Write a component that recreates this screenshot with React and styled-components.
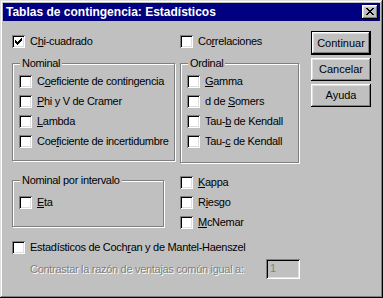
import React from 'react';
import styled, { createGlobalStyle } from 'styled-components';

const GlobalStyle = createGlobalStyle`
  html, body {
    margin: 0;
    padding: 0;
    background: #c0c0c0;
  }
  body {
    font-family: "Liberation Sans", Arial, sans-serif;
    font-size: 11px;
    letter-spacing: -0.3px;
    color: #000;
  }
`;

const Window = styled.div`
  width: 383px;
  height: 298px;
  box-sizing: border-box;
  padding: 3px;
  background: #c0c0c0;
  box-shadow: inset -1px -1px 0 #000, inset 1px 1px 0 #dfdfdf,
    inset -2px -2px 0 #808080, inset 2px 2px 0 #fff;
  display: flex;
  flex-direction: column;
`;

const TitleBar = styled.div`
  height: 18px;
  background: #000080;
  color: #fff;
  display: flex;
  align-items: center;
  padding: 0 2px 0 3px;
  font-size: 12px;
  font-weight: bold;
  letter-spacing: 0;
  white-space: nowrap;
`;

const TitleText = styled.span`
  flex: 1;
`;

const CloseButton = styled.span`
  width: 16px;
  height: 14px;
  box-sizing: border-box;
  background: #c0c0c0;
  box-shadow: inset -1px -1px 0 #000, inset 1px 1px 0 #fff,
    inset -2px -2px 0 #808080, inset 2px 2px 0 #dfdfdf;
  display: flex;
  align-items: center;
  justify-content: center;
  padding: 0 1px 1px 0;
`;

const Body = styled.div`
  display: flex;
  padding: 10px 0 0 9px;
`;

const Left = styled.div`
  width: 288px;
  margin-top: 4px;
  display: grid;
  grid-template-columns: 168px 120px;
  align-items: start;
`;

const Buttons = styled.div`
  margin-left: 11px;
  display: flex;
  flex-direction: column;
  gap: 3px;
`;

const Button = styled.div`
  width: 60px;
  height: ${p => (p.$default ? 24 : 23)}px;
  box-sizing: border-box;
  display: flex;
  align-items: center;
  justify-content: center;
  background: #c0c0c0;
  letter-spacing: 0;
  box-shadow: ${p =>
    p.$default
      ? 'inset 0 0 0 1px #000, inset -2px -2px 0 #000, inset 2px 2px 0 #fff, inset -3px -3px 0 #808080, inset 3px 3px 0 #dfdfdf'
      : 'inset -1px -1px 0 #000, inset 1px 1px 0 #fff, inset -2px -2px 0 #808080, inset 2px 2px 0 #dfdfdf'};
  padding-bottom: 1px;
`;

const Check = styled.label`
  display: flex;
  align-items: center;
  gap: 5px;
  height: 13px;
  line-height: 13px;
  white-space: nowrap;
`;

const Box = styled.span`
  flex: none;
  width: 13px;
  height: 13px;
  background: #fff;
  box-shadow: inset 1px 1px 0 #808080, inset -1px -1px 0 #fff,
    inset 2px 2px 0 #000, inset -2px -2px 0 #dfdfdf;
  display: flex;
  align-items: center;
  justify-content: center;
`;

const Group = styled.div`
  position: relative;
  box-sizing: border-box;
  width: ${p => p.$w}px;
  height: ${p => p.$h}px;
  margin-top: ${p => p.$top}px;
  border: 1px solid #808080;
  box-shadow: 1px 1px 0 #fff, inset 1px 1px 0 #fff;
  display: flex;
  flex-direction: column;
  gap: 7px;
  padding: ${p => p.$pad || '11px 0 0 6px'};
`;

const Caption = styled.span`
  position: absolute;
  top: -7px;
  left: 7px;
  padding: 0 2px;
  line-height: 13px;
  background: #c0c0c0;
  white-space: nowrap;
`;

const Stack = styled.div`
  display: flex;
  flex-direction: column;
  gap: 7px;
  margin-top: ${p => p.$top}px;
`;

const Wide = styled.div`
  grid-column: 1 / span 2;
  margin-top: ${p => p.$top}px;
`;

const OddsRow = styled.div`
  grid-column: 1 / span 2;
  margin-top: 5px;
  display: flex;
  align-items: center;
  height: 20px;
  padding-left: 18px;
`;

const Disabled = styled.span`
  color: #808080;
  text-shadow: 1px 1px 0 #fff;
  white-space: nowrap;
`;

const Field = styled.div`
  margin-left: auto;
  width: 34px;
  height: 20px;
  box-sizing: border-box;
  background: #c0c0c0;
  box-shadow: inset 1px 1px 0 #808080, inset -1px -1px 0 #fff,
    inset 2px 2px 0 #000, inset -2px -2px 0 #dfdfdf;
  color: #808080;
  padding: 3px 0 0 4px;
  line-height: 13px;
`;

const CheckMark = () => (
  <svg width="7" height="7" viewBox="0 0 7 7" shapeRendering="crispEdges">
    <path
      fill="#000"
      d="M6 0h1v3h-1zM5 1h1v3h-1zM4 2h1v3h-1zM0 2h1v3h-1zM1 3h1v3h-1zM2 4h1v3h-1zM3 3h1v3h-1z"
    />
  </svg>
);

const CloseGlyph = () => (
  <svg width="8" height="7" viewBox="0 0 8 7" shapeRendering="crispEdges">
    <path
      fill="#000"
      d="M0 0h2v1h-2zM6 0h2v1h-2zM1 1h2v1h-2zM5 1h2v1h-2zM2 2h4v1h-4zM3 3h2v1h-2zM2 4h4v1h-4zM1 5h2v1h-2zM5 5h2v1h-2zM0 6h2v1h-2zM6 6h2v1h-2z"
    />
  </svg>
);

const CheckItem = ({ checked, children }) => (
  <Check>
    <Box>{checked && <CheckMark />}</Box>
    <span>{children}</span>
  </Check>
);

export default function App() {
  return (
    <>
      <GlobalStyle />
      <Window>
        <TitleBar>
          <TitleText>Tablas de contingencia: Estadísticos</TitleText>
          <CloseButton>
            <CloseGlyph />
          </CloseButton>
        </TitleBar>
        <Body>
          <Left>
            <CheckItem checked>
              C<u>h</u>i-cuadrado
            </CheckItem>
            <CheckItem>
              Co<u>r</u>relaciones
            </CheckItem>

            <Group $w={163} $h={98} $top={15}>
              <Caption>Nominal</Caption>
              <CheckItem>
                C<u>o</u>eficiente de contingencia
              </CheckItem>
              <CheckItem>
                <u>P</u>hi y V de Cramer
              </CheckItem>
              <CheckItem>
                <u>L</u>ambda
              </CheckItem>
              <CheckItem>
                Coe<u>f</u>iciente de incertidumbre
              </CheckItem>
            </Group>
            <Group $w={119} $h={100} $top={15}>
              <Caption>Ordinal</Caption>
              <CheckItem>
                <u>G</u>amma
              </CheckItem>
              <CheckItem>
                d de <u>S</u>omers
              </CheckItem>
              <CheckItem>
                Tau-<u>b</u> de Kendall
              </CheckItem>
              <CheckItem>
                Tau-<u>c</u> de Kendall
              </CheckItem>
            </Group>

            <Group $w={152} $h={47} $top={17} $pad="15px 0 0 6px">
              <Caption>Nominal por intervalo</Caption>
              <CheckItem>
                <u>E</u>ta
              </CheckItem>
            </Group>
            <Stack $top={13}>
              <CheckItem>
                <u>K</u>appa
              </CheckItem>
              <CheckItem>
                R<u>i</u>esgo
              </CheckItem>
              <CheckItem>
                <u>M</u>cNemar
              </CheckItem>
            </Stack>

            <Wide $top={12}>
              <CheckItem>
                Estadísticos de Coch<u>r</u>an y de Mantel-Haenszel
              </CheckItem>
            </Wide>
            <OddsRow>
              <Disabled>Contrastar la razón de ventajas común igual a:</Disabled>
              <Field>1</Field>
            </OddsRow>
          </Left>
          <Buttons>
            <Button $default>Continuar</Button>
            <Button>Cancelar</Button>
            <Button>Ayuda</Button>
          </Buttons>
        </Body>
      </Window>
    </>
  );
}
